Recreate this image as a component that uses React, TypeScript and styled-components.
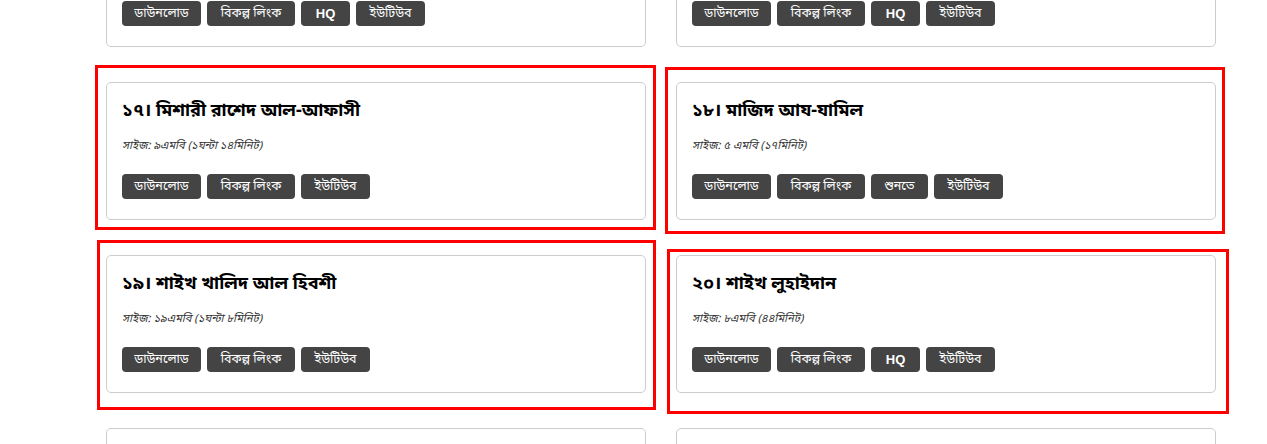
import React from "react";
import styled, { createGlobalStyle } from "styled-components";

const GlobalStyle = createGlobalStyle`
    html, body {
        margin: 0;
        padding: 0;
        background: #fff;
        overflow: hidden;
    }
    body {
        font-family: "Noto Sans Bengali", "Lohit Bengali", "Vrinda", "Liberation Sans", sans-serif;
        color: #000;
    }
`

const Page = styled.div`
    width: 1267px;
    height: 444px;
    overflow: hidden;
`

const Grid = styled.div`
    display: grid;
    grid-template-columns: 540px 540px;
    column-gap: 30px;
    row-gap: 35px;
    margin-top: -91px;
    padding-left: 106px;
`

const Card = styled.div`
    position: relative;
    height: 138px;
    box-sizing: border-box;
    border: 1px solid #ccc;
    border-radius: 5px;
    padding: 15px;
    background: #fff;
    display: flex;
    flex-direction: column;
`

const Title = styled.h3`
    margin: 0;
    font-size: 18px;
    line-height: 26px;
    font-weight: bold;
    color: #000;
`

const Size = styled.p`
    margin: 14px 0 0;
    font-size: 11.2px;
    line-height: 18px;
    font-style: italic;
    color: #333;
`

const Buttons = styled.div`
    display: flex;
    gap: 6px;
    margin-top: 18px;
`

const Btn = styled.a`
    display: inline-flex;
    align-items: center;
    justify-content: center;
    height: 25px;
    width: ${p => p.$w}px;
    box-sizing: border-box;
    background: #444;
    color: #fff;
    border-radius: 4px;
    font-size: ${p => p.$latin ? 13 : 12.5}px;
    font-weight: ${p => p.$latin ? "bold" : "normal"};
    text-decoration: none;
    font-family: ${p => p.$latin ? `"Liberation Sans", Arial, sans-serif` : "inherit"};
`

const Highlight = styled.div`
    position: absolute;
    border: 3px solid #ff0000;
    pointer-events: none;
    left: ${p => p.$o[0]}px;
    top: ${p => p.$o[1]}px;
    right: ${p => p.$o[2]}px;
    bottom: ${p => p.$o[3]}px;
`

type Item = {
    title: string
    size: string
    buttons: string[]
    box?: number[]
}

const widths: Record<string, number> = {
    "ডাউনলোড": 79,
    "বিকল্প লিংক": 88,
    "HQ": 49,
    "ইউটিউব": 69,
    "শুনতে": 57,
}

const items: Item[] = [
    { title: "১৫। শাইখ আবদুর রহমান আস-সুদাইস", size: "সাইজ: ১০এমবি (১ঘন্টা)", buttons: ["ডাউনলোড", "বিকল্প লিংক", "HQ", "ইউটিউব"] },
    { title: "১৬। শাইখ সাউদ আশ-শুরাইম", size: "সাইজ: ১২এমবি (১ঘন্টা)", buttons: ["ডাউনলোড", "বিকল্প লিংক", "HQ", "ইউটিউব"] },
    { title: "১৭। মিশারী রাশেদ আল-আফাসী", size: "সাইজ: ৯এমবি (১ঘন্টা ১৪মিনিট)", buttons: ["ডাউনলোড", "বিকল্প লিংক", "ইউটিউব"], box: [-12, -18, -11, -11] },
    { title: "১৮। মাজিদ আয-যামিল", size: "সাইজ: ৫ এমবি (১৭মিনিট)", buttons: ["ডাউনলোড", "বিকল্প লিংক", "শুনতে", "ইউটিউব"], box: [-12, -16, -10, -15] },
    { title: "১৯। শাইখ খালিদ আল হিবশী", size: "সাইজ: ১৯এমবি (১ঘন্টা ৮মিনিট)", buttons: ["ডাউনলোড", "বিকল্প লিংক", "ইউটিউব"], box: [-10, -16, -11, -18] },
    { title: "২০। শাইখ লুহাইদান", size: "সাইজ: ৮এমবি (৪৪মিনিট)", buttons: ["ডাউনলোড", "বিকল্প লিংক", "HQ", "ইউটিউব"], box: [-10, -7, -14, -22] },
    { title: "২১। শাইখ আলী জাবের", size: "সাইজ: ৭এমবি (৪০মিনিট)", buttons: ["ডাউনলোড", "বিকল্প লিংক", "ইউটিউব"] },
    { title: "২২। শাইখ মাহের আল-মুয়াইকিলী", size: "সাইজ: ৮এমবি (৪৫মিনিট)", buttons: ["ডাউনলোড", "বিকল্প লিংক", "ইউটিউব"] },
]

const App = () => <Page>
    <GlobalStyle />
    <Grid>
        {items.map(item => <Card key={item.title}>
            <Title>{item.title}</Title>
            <Size>{item.size}</Size>
            <Buttons>
                {item.buttons.map(b => <Btn key={b} href="#" $w={widths[b]} $latin={b === "HQ"}>{b}</Btn>)}
            </Buttons>
            {item.box && <Highlight $o={item.box} />}
        </Card>)}
    </Grid>
</Page>

export default App
